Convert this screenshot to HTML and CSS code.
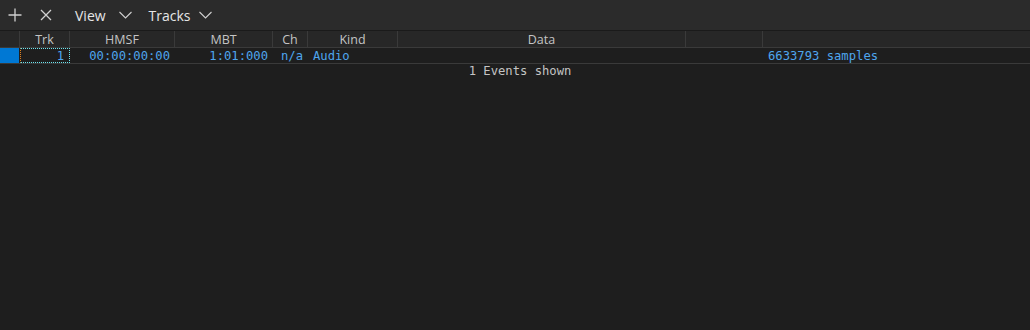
FILE: index.html
```html
<!DOCTYPE html>
<html>
<head>
<meta charset="utf-8">
<link rel="stylesheet" href="styles.css">
</head>
<body>
<div class="toolbar">
  <button class="icon-btn plus" aria-label="Add">
    <svg width="14" height="14" viewBox="0 0 14 14"><path d="M7 0.5V13.5M0.5 7H13.5" stroke="#d0d0d0" stroke-width="1.3" fill="none"/></svg>
  </button>
  <button class="icon-btn close" aria-label="Close">
    <svg width="12" height="12" viewBox="0 0 12 12"><path d="M1 1L11 11M11 1L1 11" stroke="#d0d0d0" stroke-width="1.3" fill="none"/></svg>
  </button>
  <div class="menu view">View
    <svg class="chev" width="13" height="8" viewBox="0 0 13 8"><path d="M0.5 1L6.5 7L12.5 1" stroke="#d0d0d0" stroke-width="1.1" fill="none"/></svg>
  </div>
  <div class="menu tracks">Tracks
    <svg class="chev" width="13" height="8" viewBox="0 0 13 8"><path d="M0.5 1L6.5 7L12.5 1" stroke="#d0d0d0" stroke-width="1.1" fill="none"/></svg>
  </div>
</div>
<div class="sep"></div>
<div class="grid header">
  <div class="c m"></div>
  <div class="c">Trk</div>
  <div class="c">HMSF</div>
  <div class="c">MBT</div>
  <div class="c">Ch</div>
  <div class="c">Kind</div>
  <div class="c">Data</div>
  <div class="c"></div>
  <div class="c last"></div>
</div>
<div class="grid row">
  <div class="c marker"></div>
  <div class="c r focus">1</div>
  <div class="c r">00:00:00:00</div>
  <div class="c r">1:01:000</div>
  <div class="c l ch">n/a</div>
  <div class="c l">Audio</div>
  <div class="c l"></div>
  <div class="c l"></div>
  <div class="c l">6633793 samples</div>
</div>
<div class="status">1 Events shown</div>
</body>
</html>
```
FILE: styles.css
```css
html, body {
  margin: 0;
  padding: 0;
  background: #1e1e1e;
  width: 1030px;
  height: 330px;
  overflow: hidden;
}
.toolbar {
  height: 30px;
  background: #2b2b2b;
  display: flex;
  align-items: center;
  font-family: "Open Sans", "Liberation Sans", sans-serif;
  font-size: 14px;
  color: #e6e6e6;
}
.icon-btn {
  background: none;
  border: 0;
  padding: 0;
  display: flex;
  align-items: center;
  justify-content: center;
}
.plus { margin-left: 8px; width: 14px; height: 14px; }
.close { margin-left: 18px; width: 12px; height: 12px; }
.menu {
  display: flex;
  align-items: center;
}
.view { margin-left: 23px; gap: 13px; }
.tracks { margin-left: 17px; gap: 8px; }
.sep {
  height: 1px;
  background: #1a1a1a;
}
.grid {
  display: grid;
  grid-template-columns: 20px 50px 105px 98px 35px 90px 288px 77px 1fr;
}
.header {
  height: 16px;
  background: #272727;
  border-bottom: 1px solid #3a3a3a;
  font-family: "Open Sans", "Liberation Sans", sans-serif;
  font-size: 12.5px;
  color: #c4c4c4;
  line-height: 17px;
}
.header .c {
  text-align: center;
  border-right: 1px solid #3a3a3a;
}
.header .c.last { border-right: 0; }
.row {
  height: 15px;
  background: #1e1e1e;
  border-bottom: 1px solid #3a3a3a;
  font-family: "DejaVu Sans Mono", "Liberation Mono", monospace;
  font-size: 12.2px;
  line-height: 16px;
  color: #4ea6ee;
}
.row .c { white-space: nowrap; overflow: hidden; }
.row .r { text-align: right; padding-right: 5px; }
.row .l { text-align: left; padding-left: 5px; }
.row .ch { padding-left: 8px; }
.marker { background: #0078d4; margin-right: 1px; }
.focus {
  box-sizing: border-box;
  border: 1px dotted #6ee6f0;
  border-left-color: #e08020;
  line-height: 14px;
}
.status {
  text-align: center;
  font-family: "DejaVu Sans Mono", "Liberation Mono", monospace;
  font-size: 12.2px;
  color: #c4c4c4;
  padding-left: 10px;
  line-height: 15px;
}
```
